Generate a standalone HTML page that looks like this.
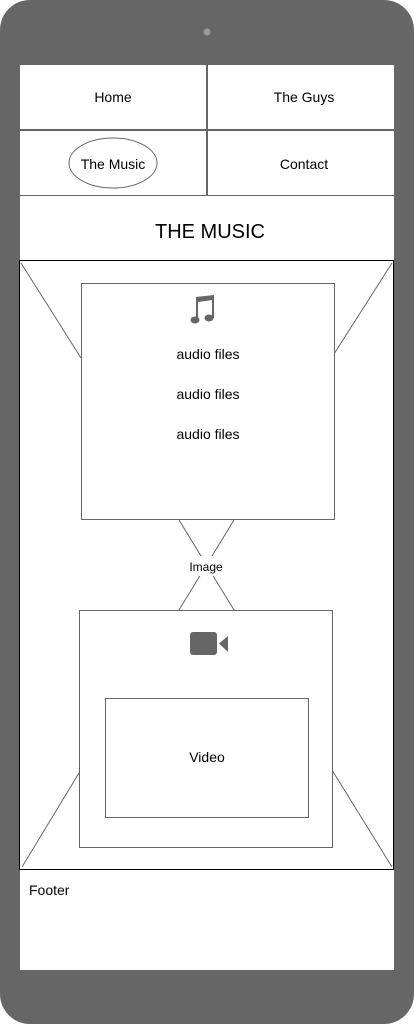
<!DOCTYPE html>
<html><head><meta charset="utf-8"><style>
body{margin:0;width:414px;height:1024px;background:#fff;font-family:"Liberation Sans",Arial,sans-serif;overflow:hidden}
</style></head><body>
<svg width="414" height="1024" xmlns="http://www.w3.org/2000/svg" style="position:absolute;left:0;top:0">
<rect x="0" y="0" width="414" height="1024" rx="30" fill="#666"/>
<circle cx="207" cy="32" r="3.5" fill="#999"/>
<rect x="20" y="65" width="374" height="905" fill="#fff"/>
<line x1="20" y1="130" x2="394" y2="130" stroke="#666" stroke-width="2"/>
<line x1="20" y1="195.5" x2="394" y2="195.5" stroke="#666" stroke-width="1"/>
<line x1="207" y1="65" x2="207" y2="195" stroke="#666" stroke-width="2"/>
<text x="113" y="102" font-size="14" text-anchor="middle" fill="#000">Home</text>
<text x="304" y="102" font-size="14" text-anchor="middle" fill="#000">The Guys</text>
<ellipse cx="113" cy="163" rx="44" ry="25" fill="none" stroke="#666" stroke-width="1"/>
<text x="113" y="169" font-size="14" text-anchor="middle" fill="#000">The Music</text>
<text x="304" y="169" font-size="14" text-anchor="middle" fill="#000">Contact</text>
<text x="210" y="238" font-size="20" text-anchor="middle" fill="#000">THE MUSIC</text>
<rect x="19.5" y="260.5" width="374" height="609" fill="none" stroke="#000" stroke-width="1"/>
<g stroke="#666" stroke-width="1" fill="none">
<line x1="21" y1="263" x2="81" y2="358"/>
<line x1="392" y1="263" x2="334" y2="354"/>
<line x1="79" y1="773" x2="22" y2="867"/>
<line x1="332" y1="770" x2="392" y2="867"/>
<line x1="179" y1="520" x2="234" y2="610"/>
<line x1="234" y1="520" x2="179" y2="610"/>
</g>
<rect x="182" y="556" width="50" height="20" fill="#fff"/>
<text x="206" y="571" font-size="12" text-anchor="middle" fill="#000">Image</text>
<rect x="81.5" y="283.5" width="253" height="236" fill="#fff" stroke="#666"/>
<g fill="#666">
<path d="M196 297 L214 295 L214 318 L212 318 L212 300 L198 302 L198 320 L196 320 Z"/>
<ellipse cx="195" cy="320" rx="4.5" ry="3.5"/>
<ellipse cx="209" cy="318" rx="4.5" ry="3.5"/>
</g>
<text x="208" y="359" font-size="14" text-anchor="middle" fill="#000">audio files</text>
<text x="208" y="399" font-size="14" text-anchor="middle" fill="#000">audio files</text>
<text x="208" y="439" font-size="14" text-anchor="middle" fill="#000">audio files</text>
<rect x="79.5" y="610.5" width="253" height="237" fill="#fff" stroke="#666"/>
<rect x="190" y="632" width="27" height="23" rx="3" fill="#666"/>
<path d="M219 643.5 L228 636 L228 652 Z" fill="#666"/>
<rect x="105.5" y="698.5" width="203" height="119" fill="#fff" stroke="#666"/>
<text x="207" y="762" font-size="14" text-anchor="middle" fill="#000">Video</text>
<text x="29" y="895" font-size="14" fill="#000">Footer</text>
</svg>
</body></html>
